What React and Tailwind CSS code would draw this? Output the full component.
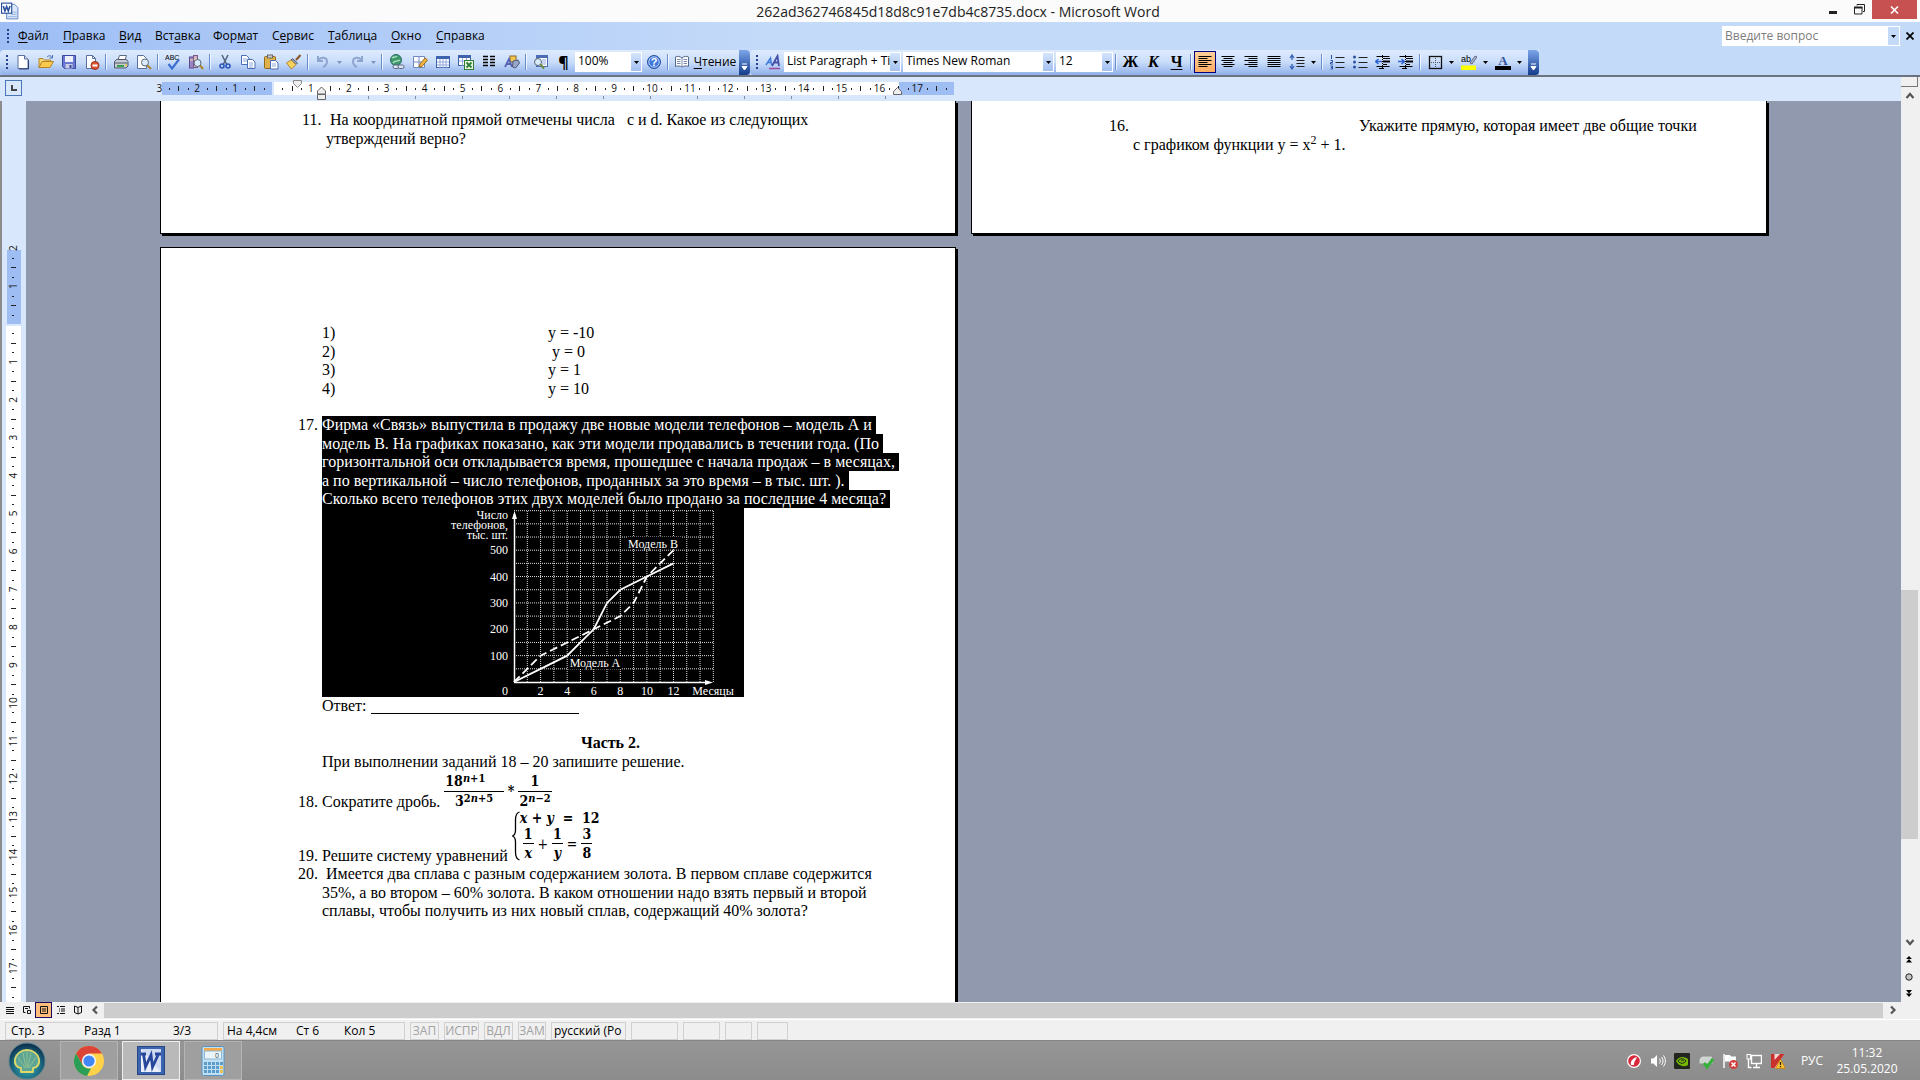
import React from 'react';

const CM = 37.9; // one centimetre on the rulers

/* ---------- small building blocks ---------- */

const Icon = ({ children, size = 16 }) => (
  <svg width={size} height={size} viewBox="0 0 16 16" fill="none" aria-hidden="true" className="shrink-0">
    {children}
  </svg>
);

const ToolButton = ({ label, children, active }) => (
  <button
    aria-label={label}
    className={
      active
        ? 'flex h-[22px] w-[22px] shrink-0 items-center justify-center border border-[#000080] bg-linear-to-b from-[#ffd09a] to-[#fdac62]'
        : 'flex h-[22px] w-[23px] shrink-0 items-center justify-center'
    }
  >
    {children}
  </button>
);

const Sep = () => (
  <div className="flex w-[6px] shrink-0 justify-center">
    <div className="h-4 w-px bg-[#6a8ccb]" />
    <div className="h-4 w-px bg-white/70" />
  </div>
);

const Caret = ({ color = '#000' }) => (
  <svg width="5" height="3" viewBox="0 0 5 3" aria-hidden="true">
    <path d="M0 0h5L2.5 3z" fill={color} />
  </svg>
);

const DropButton = ({ label, color }) => (
  <button aria-label={label} className="flex h-[22px] w-[11px] shrink-0 items-center justify-center">
    <Caret color={color} />
  </button>
);

const Grip = () => (
  <div className="flex w-[9px] shrink-0 flex-col items-center gap-[2px]">
    {[0, 1, 2, 3].map((i) => (
      <div key={i} className="h-[2px] w-[2px] bg-[#27418f]" />
    ))}
  </div>
);

const Combo = ({ label, value, width }) => (
  <div className={`relative h-5 shrink-0 bg-white ${width}`}>
    <select aria-label={label} className="block h-[18px] w-full appearance-none overflow-hidden bg-transparent pr-[10px] pl-[3px] text-xs leading-[18px] whitespace-nowrap outline-none">
      <option>{value}</option>
    </select>
    <div className="pointer-events-none absolute top-px right-px flex h-[18px] w-[10px] items-center justify-center bg-linear-to-b from-[#d4e4fb] to-[#a3c0f0]">
      <Caret />
    </div>
  </div>
);

const ToolbarEnd = () => (
  <button aria-label="Параметры панелей инструментов" className="flex h-[25px] w-[11px] shrink-0 items-end justify-center rounded-r-sm bg-linear-to-b from-[#7ea6ea] to-[#143c8c] pb-1">
    <svg width="7" height="8" viewBox="0 0 7 8" aria-hidden="true">
      <path d="M1 1h5M1 3.500h5L3.500 7z" stroke="#fff" fill="#fff" strokeWidth="1" />
    </svg>
  </button>
);

/* ---------- toolbar icons ---------- */

const pageShape = <path d="M3 1.500h6.500l3.500 3.500v9.500h-10z" fill="#fff" stroke="#5a6f9e" />;

const NewIcon = () => (
  <Icon>
    {pageShape}
    <path d="M9.500 1.500v3.500h3.500" fill="#cfdcf3" stroke="#5a6f9e" />
    <path d="M13.500 6v9H4" stroke="#2b3f70" />
  </Icon>
);

const OpenIcon = () => (
  <Icon>
    <path d="M1 13.500v-9h4l1.500 1.500h6v2" fill="#f7d774" stroke="#b0852a" />
    <path d="M1 13.500l3-6h11.500l-3.500 6z" fill="#fbc94c" stroke="#b0852a" />
    <path d="M9 3c2-2 4-1.500 5 .5M14.500 1v3h-3" stroke="#4a6db5" />
  </Icon>
);

const SaveIcon = () => (
  <Icon>
    <path d="M1.500 1.500h13v13h-11l-2-2z" fill="#6a77d0" stroke="#3b479c" />
    <rect x="4" y="2" width="8" height="6" fill="#eef1fb" />
    <rect x="4.500" y="10" width="7" height="4.500" fill="#c9cde8" />
    <rect x="8.500" y="11" width="2" height="3" fill="#3b479c" />
  </Icon>
);

const PermissionIcon = () => (
  <Icon>
    <path d="M2.500 1.500h6l3 3v10h-9z" fill="#fff" stroke="#5a6f9e" />
    <path d="M8.500 1.500v3h3" stroke="#5a6f9e" />
    <circle cx="11" cy="11.500" r="4" fill="#dd5533" stroke="#9c2d17" />
    <path d="M8.500 11.500h5" stroke="#fff" strokeWidth="2" />
  </Icon>
);

const PrintIcon = () => (
  <Icon>
    <path d="M5 6l1.500-4.500h7L12 6" fill="#fff" stroke="#5d6b80" />
    <path d="M1.500 7.500l2-2h10l1.500 2v4.500l-2 2h-11.500z" fill="#c6cbd3" stroke="#4e5a6c" />
    <path d="M2 9h12.500" stroke="#4e5a6c" />
    <path d="M4 12h7" stroke="#35a04a" strokeWidth="2" />
    <path d="M12 11h2" stroke="#f0c040" strokeWidth="1.500" />
  </Icon>
);

const PreviewIcon = () => (
  <Icon>
    <path d="M1.500 1.500h6l3 3v10h-9z" fill="#fff" stroke="#5a6f9e" />
    <circle cx="9" cy="8.500" r="3.500" fill="#d9ecfb" stroke="#5a6674" />
    <path d="M11.500 11.500l3.500 3.500" stroke="#b0852a" strokeWidth="2" />
  </Icon>
);

const SpellIcon = () => (
  <Icon>
    <text x="0" y="6" fontSize="7" fontFamily="Liberation Sans, sans-serif" fill="#000">ABC</text>
    <path d="M3.500 10l3.500 4.500L14 5.500" stroke="#3b6fd0" strokeWidth="2.200" />
  </Icon>
);

const ResearchIcon = () => (
  <Icon>
    <rect x="1.500" y="3" width="4" height="11" fill="#9d84c8" stroke="#5c4a8a" />
    <rect x="5.500" y="1.500" width="4" height="12" fill="#d3b2c8" stroke="#7a5a86" />
    <path d="M2 6h3M6 5h3" stroke="#f5e6a0" />
    <circle cx="9.500" cy="9" r="3.500" fill="#d9ecfb" stroke="#5a6674" />
    <path d="M12 11.500l3 3.500" stroke="#b0852a" strokeWidth="2" />
  </Icon>
);

const CutIcon = () => (
  <Icon>
    <path d="M5 1l4.500 9M11 1L6.500 10" stroke="#54657f" strokeWidth="1.600" />
    <circle cx="5" cy="12" r="2" stroke="#2a57b8" strokeWidth="1.600" />
    <circle cx="11" cy="12" r="2" stroke="#2a57b8" strokeWidth="1.600" />
  </Icon>
);

const CopyIcon = () => (
  <Icon>
    <path d="M1.500 1.500h5l2.500 2.500v6.500h-7.500z" fill="#fff" stroke="#4a6db5" />
    <path d="M3 5h4M3 7h4" stroke="#8fa9dc" />
    <path d="M7.500 5.500h5l2.500 2.500v6.500h-7.500z" fill="#fff" stroke="#4a6db5" />
    <path d="M9 9h4M9 11h4M9 13h4" stroke="#8fa9dc" />
  </Icon>
);

const PasteIcon = () => (
  <Icon>
    <rect x="1.500" y="2.500" width="11" height="12" rx="1" fill="#e0b04a" stroke="#8c6a1f" />
    <rect x="4.500" y="1" width="5" height="3" fill="#c9c9c9" stroke="#6a6a6a" />
    <path d="M7.500 6.500h5l2.500 2.500v6h-7.500z" fill="#fff" stroke="#4a6db5" />
    <path d="M9 10h4M9 12h4" stroke="#8fa9dc" />
  </Icon>
);

const BrushIcon = () => (
  <Icon>
    <path d="M10 6l4.500-5" stroke="#8c5a30" strokeWidth="2.200" />
    <path d="M6.500 4.500l5 4.500-1.500 1.500-5-4.500z" fill="#8d9bb4" stroke="#58657d" />
    <path d="M5 6l5 4.500-4.500 4.500-5-6z" fill="#f6d260" stroke="#b0852a" />
  </Icon>
);

const UndoIcon = ({ flip }) => (
  <Icon>
    <path
      d={flip ? 'M13 2v5H8M12.500 6.500C10 2.500 4 3 4 7.500c0 3 2 4.500 4 5.500' : 'M3 2v5h5M3.500 6.500C6 2.500 12 3 12 7.500c0 3-2 4.500-4 5.500'}
      stroke="#8ea5cf"
      strokeWidth="2"
    />
  </Icon>
);

const LinkIcon = () => (
  <Icon>
    <circle cx="7" cy="6" r="5.500" fill="#3f9a6a" stroke="#2e6b70" />
    <path d="M3 4c2-2 4 0 5-2M4 9c2-3 5-1 7-3" stroke="#a9dcc0" strokeWidth="1.500" />
    <rect x="4" y="11" width="6" height="3.500" rx="1.700" stroke="#58657d" fill="#dfe6f2" />
    <rect x="9" y="11" width="6" height="3.500" rx="1.700" stroke="#58657d" fill="#dfe6f2" />
  </Icon>
);

const TableDrawIcon = () => (
  <Icon>
    <path d="M1.500 2.500h11v11h-11zM1.500 8h11M7 2.500v11" fill="#fff" stroke="#7089bf" />
    <path d="M7 13l1-3 5-6 2.500 2-5.500 6.500z" fill="#f3b345" stroke="#9a6a20" />
  </Icon>
);

const TableIcon = () => (
  <Icon>
    <rect x="1.500" y="2.500" width="13" height="11" fill="#fff" stroke="#3f62ad" />
    <rect x="1" y="2" width="14" height="3" fill="#3f62ad" />
    <path d="M2 8h12M2 11h12M5 5v9M8 5v9M11 5v9" stroke="#8fa9dc" />
  </Icon>
);

const ExcelIcon = () => (
  <Icon>
    <rect x="0.500" y="1.500" width="12" height="10" fill="#fff" stroke="#3f62ad" />
    <rect x="0" y="1" width="13" height="3" fill="#3f62ad" />
    <path d="M1 7h12M4.500 4v8M8.500 4v8" stroke="#8fa9dc" />
    <rect x="6.500" y="6.500" width="9" height="9" fill="#e8f5e4" stroke="#2e7d32" />
    <path d="M8.500 8.500l5 5M13.500 8.500l-5 5" stroke="#2e7d32" strokeWidth="1.800" />
  </Icon>
);

const ColumnsIcon = () => (
  <Icon>
    <path d="M2 2.500h5M2 5.500h5M2 8.500h5M2 11.500h5M9 2.500h5M9 5.500h5M9 8.500h5M9 11.500h5" stroke="#000" strokeWidth="1.500" />
  </Icon>
);

const DrawingIcon = () => (
  <Icon>
    <rect x="6" y="2" width="6" height="6" fill="#f4c752" stroke="#8c6a1f" />
    <path d="M1 13L5 5l3 8M2.500 10h4.500" stroke="#5663b5" strokeWidth="1.800" />
    <path d="M9 7l5-1 1.500 3-4 5-3-1z" fill="#9aa7c8" stroke="#4b577a" />
  </Icon>
);

const DocMapIcon = () => (
  <Icon>
    <rect x="3.500" y="1.500" width="11" height="11" fill="#fff" stroke="#4a6db5" />
    <path d="M4 3h10" stroke="#4a6db5" strokeWidth="2" />
    <path d="M9 6h4M9 8h4M9 10h4" stroke="#8fa9dc" />
    <circle cx="5" cy="8" r="3.500" fill="#d9ecfb" stroke="#5a6674" />
    <path d="M7.500 10.500l3.500 4" stroke="#6c8a3a" strokeWidth="2" />
  </Icon>
);

const HelpIcon = () => (
  <Icon>
    <circle cx="8" cy="8" r="6.500" fill="#3d78dc" stroke="#2950a4" />
    <circle cx="8" cy="8" r="5.200" stroke="#dce8fb" strokeWidth="0.800" />
    <text x="8" y="12" textAnchor="middle" fontSize="11" fontWeight="700" fontFamily="Liberation Sans, sans-serif" fill="#fff">?</text>
  </Icon>
);

const BookIcon = () => (
  <Icon>
    <path d="M8 4C6 2 3 2 1.500 3v9.500c2-1 5-.5 6.500.500 1.500-1 4.500-1.500 6.500-.5V3C13 2 10 2 8 4z" fill="#fff" stroke="#56678c" />
    <path d="M8 4v9M3 5.500h3.500M3 7.500h3.500M3 9.500h3.500M9.500 5.500H13M9.500 7.500H13M9.500 9.500H13" stroke="#7d8cae" />
  </Icon>
);

const StylesIcon = () => (
  <Icon>
    <path d="M1 11L5.500 4l1 7M2.500 8.500h4" stroke="#3d78dc" strokeWidth="1.400" />
    <path d="M7 12l5.500-10 1.500 10M9 8.500h4.500" stroke="#4450a8" strokeWidth="1.800" />
    <path d="M4 14.500h11" stroke="#9c4aa0" strokeWidth="1.500" />
  </Icon>
);

const ALIGN = {
  left: 'M1.500 2.500h13M1.500 4.500h9M1.500 6.500h13M1.500 8.500h9M1.500 10.500h13M1.500 12.500h9',
  center: 'M1.500 2.500h13M3.500 4.500h9M1.500 6.500h13M3.500 8.500h9M1.500 10.500h13M3.500 12.500h9',
  right: 'M1.500 2.500h13M5.500 4.500h9M1.500 6.500h13M5.500 8.500h9M1.500 10.500h13M5.500 12.500h9',
  full: 'M1.500 2.500h13M1.500 4.500h13M1.500 6.500h13M1.500 8.500h13M1.500 10.500h13M1.500 12.500h13',
};

const AlignIcon = ({ kind }) => (
  <Icon>
    <path d={ALIGN[kind]} stroke="#000" />
  </Icon>
);

const SpacingIcon = () => (
  <Icon>
    <path d="M7.500 3.500h8M7.500 6.500h8M7.500 9.500h8M7.500 12.500h8" stroke="#222" />
    <path d="M3 1v5M1 4l2-3 2 3M3 10v5M1 12l2 3 2-3" stroke="#3a62b4" strokeWidth="1.300" />
  </Icon>
);

const NumberedIcon = () => (
  <Icon>
    <path d="M6.500 3.500h9M6.500 8.500h9M6.500 13.500h9" stroke="#222" />
    <path d="M2.500 1v4M1.500 6.500h2v2h-2v1.500h2.500M1.500 12h2v3h-2M2 13.500h1.500" stroke="#2c50a0" />
  </Icon>
);

const BulletsIcon = () => (
  <Icon>
    <path d="M6.500 3.500h9M6.500 8.500h9M6.500 13.500h9" stroke="#222" />
    <circle cx="2.500" cy="3" r="1.500" fill="#2c50a0" />
    <circle cx="2.500" cy="8" r="1.500" fill="#2c50a0" />
    <circle cx="2.500" cy="13" r="1.500" fill="#2c50a0" />
  </Icon>
);

const IndentIcon = ({ inward }) => (
  <Icon>
    <path d="M1.500 2.500h13M8 4.500h7M8 10.500h4M1.500 12.500h13M4 14.500h5" stroke="#000" />
    <path d="M8 7.500h7" stroke="#000" strokeWidth="2" />
    <path d={inward ? 'M0 7.500h6M3.500 5l3 2.500-3 2.500' : 'M7 7.500H1M3.500 5l-3 2.500 3 2.500'} stroke="#2c62d0" strokeWidth="1.500" />
    <path d="M7.500 1v14" stroke="#000" strokeDasharray="1 1" />
  </Icon>
);

const BordersIcon = () => (
  <Icon>
    <rect x="2.500" y="2.500" width="12" height="12" stroke="#111" strokeWidth="1.300" />
    <path d="M8.500 4v9M4 8.500h9" stroke="#555" strokeDasharray="1 1" />
  </Icon>
);

const HighlightIcon = () => (
  <Icon>
    <text x="0" y="8" fontSize="9" fontFamily="Liberation Sans, sans-serif" fill="#000">ab</text>
    <path d="M9 9l5-7 2 1-5 7z" fill="#aeb6c8" stroke="#4b577a" strokeWidth="0.800" />
    <rect x="0" y="11.500" width="15" height="4.500" fill="#ffff00" />
  </Icon>
);

const FontColorIcon = () => (
  <Icon>
    <text x="8" y="11" textAnchor="middle" fontSize="13" fontWeight="700" fontFamily="Liberation Serif, serif" fill="#33529c">A</text>
    <rect x="0" y="12" width="16" height="4" fill="#000" />
  </Icon>
);

/* ---------- window chrome ---------- */

const WordDocIcon = () => (
  <Icon size={18}>
    <path d="M5 2h7l3 3v10H5z" fill="#dce8fb" stroke="#5a7fc0" strokeWidth="0.800" />
    <path d="M9 9h5M9 11h5M6 13h8" stroke="#8fb0e0" strokeWidth="0.800" />
    <rect x="0.500" y="1" width="9" height="9" fill="#fff" stroke="#2a4f9c" />
    <path d="M2 3.500l1.500 4.500 1.500-4 1.500 4L8 3.500" stroke="#2a4f9c" strokeWidth="1.400" />
  </Icon>
);

const TitleBar = () => (
  <header className="flex h-[22px] items-start bg-[#fbfbfb]">
    <div className="flex w-24 items-center pt-[2px] pl-[1px]">
      <WordDocIcon />
    </div>
    <h1 className="flex-1 text-center text-sm leading-[23px] text-[#222]">
      262ad362746845d18d8c91e7db4c8735.docx - Microsoft Word
    </h1>
    <div className="flex pr-[3px]">
      <button aria-label="Свернуть" className="flex h-[19px] w-[26px] items-center justify-center">
        <svg width="10" height="10" viewBox="0 0 10 10"><path d="M1 7.500h8" stroke="#222" strokeWidth="3" /></svg>
      </button>
      <button aria-label="Свернуть в окно" className="flex h-[19px] w-[26px] items-center justify-center">
        <svg width="11" height="11" viewBox="0 0 11 11" fill="none">
          <path d="M3 1.500V.5h7.500v7h-1.500" stroke="#222" />
          <path d="M.5 3.500h7.500v6.500H.5z" stroke="#222" />
          <path d="M0 3.500h8.500" stroke="#222" strokeWidth="2" />
        </svg>
      </button>
      <button aria-label="Закрыть" className="flex h-[19px] w-[45px] items-center justify-center bg-[#c75050]">
        <svg width="9" height="8" viewBox="0 0 9 8"><path d="M1 .5l7 7M8 .5l-7 7" stroke="#fff" strokeWidth="1.600" /></svg>
      </button>
    </div>
  </header>
);

const MENU = [
  ['', 'Ф', 'айл', 'w-[45px]'],
  ['', 'П', 'равка', 'w-[56px]'],
  ['', 'В', 'ид', 'w-[36px]'],
  ['Вст', 'а', 'вка', 'w-[58px]'],
  ['Фор', 'м', 'ат', 'w-[59px]'],
  ['С', 'е', 'рвис', 'w-[56px]'],
  ['', 'Т', 'аблица', 'w-[63px]'],
  ['', 'О', 'кно', 'w-[45px]'],
  ['', 'С', 'правка', 'w-[62px]'],
];

const MenuBar = () => (
  <div className="flex h-7 items-center">
    <div className="w-[3px]" />
    <Grip />
    <nav className="flex flex-1 pl-[6px] text-xs text-black">
      {MENU.map(([before, key, after, width]) => (
        <button key={before + key + after} className={`${width} text-left whitespace-nowrap`}>
          {before}
          <span className="underline underline-offset-2">{key}</span>
          {after}
        </button>
      ))}
    </nav>
    <div className="flex h-5 w-[178px] bg-white">
      <input
        aria-label="Введите вопрос"
        placeholder="Введите вопрос"
        className="min-w-0 flex-1 pl-[3px] text-xs placeholder-[#7d7d7d] outline-none"
      />
      <button aria-label="Список вопросов" className="my-px mr-px flex w-[11px] items-center justify-center bg-[#c4daf9]">
        <Caret />
      </button>
    </div>
    <button aria-label="Закрыть документ" className="flex w-5 items-center justify-center">
      <svg width="8" height="8" viewBox="0 0 8 8"><path d="M.5.5l7 7M7.500.5l-7 7" stroke="#000" strokeWidth="1.700" /></svg>
    </button>
  </div>
);

const TOOLBAR_BG = 'flex h-[25px] items-start rounded-l-sm bg-linear-to-b from-[#deebfd] via-[#c8dcfa] to-[#8fb0ea]';

const TOOLS = 'flex h-6 items-center';

const Toolbars = () => (
  <div className="flex">
    <div className={TOOLBAR_BG}>
      <div className={TOOLS}>
        <div className="w-[2px]" />
        <Grip />
        <ToolButton label="Создать"><NewIcon /></ToolButton>
        <ToolButton label="Открыть"><OpenIcon /></ToolButton>
        <ToolButton label="Сохранить"><SaveIcon /></ToolButton>
        <ToolButton label="Разрешения"><PermissionIcon /></ToolButton>
        <Sep />
        <ToolButton label="Печать"><PrintIcon /></ToolButton>
        <ToolButton label="Предварительный просмотр"><PreviewIcon /></ToolButton>
        <Sep />
        <ToolButton label="Правописание"><SpellIcon /></ToolButton>
        <ToolButton label="Справочные материалы"><ResearchIcon /></ToolButton>
        <Sep />
        <ToolButton label="Вырезать"><CutIcon /></ToolButton>
        <ToolButton label="Копировать"><CopyIcon /></ToolButton>
        <ToolButton label="Вставить"><PasteIcon /></ToolButton>
        <ToolButton label="Формат по образцу"><BrushIcon /></ToolButton>
        <Sep />
        <ToolButton label="Отменить"><UndoIcon /></ToolButton>
        <DropButton label="Список отмены" color="#7d93bd" />
        <ToolButton label="Вернуть"><UndoIcon flip /></ToolButton>
        <DropButton label="Список возврата" color="#7d93bd" />
        <Sep />
        <ToolButton label="Гиперссылка"><LinkIcon /></ToolButton>
        <ToolButton label="Таблицы и границы"><TableDrawIcon /></ToolButton>
        <ToolButton label="Добавить таблицу"><TableIcon /></ToolButton>
        <ToolButton label="Лист Excel"><ExcelIcon /></ToolButton>
        <ToolButton label="Колонки"><ColumnsIcon /></ToolButton>
        <ToolButton label="Рисование"><DrawingIcon /></ToolButton>
        <Sep />
        <ToolButton label="Схема документа"><DocMapIcon /></ToolButton>
        <ToolButton label="Непечатаемые знаки"><span className="text-base leading-5 font-bold">¶</span></ToolButton>
        <Combo label="Масштаб" value="100%" width="w-[67px]" />
        <ToolButton label="Справка"><HelpIcon /></ToolButton>
        <Sep />
        <button className="flex w-[68px] items-center justify-center gap-1 text-xs">
          <BookIcon />
          <span><span className="underline underline-offset-2">Ч</span>тение</span>
        </button>
      </div>
      <ToolbarEnd />
    </div>
    <div className={TOOLBAR_BG}>
      <div className={TOOLS}>
        <div className="w-[2px]" />
        <Grip />
        <ToolButton label="Стили и форматирование"><StylesIcon /></ToolButton>
        <div className="flex gap-[2px]">
          <Combo label="Стиль" value="List Paragraph + Ti" width="w-[117px]" />
          <Combo label="Шрифт" value="Times New Roman" width="w-[151px]" />
          <Combo label="Размер шрифта" value="12" width="w-[57px]" />
        </div>
        <Sep />
        <div className="flex font-['Liberation_Serif',serif] text-base leading-5 font-bold">
          <ToolButton label="Полужирный">Ж</ToolButton>
          <ToolButton label="Курсив"><span className="italic">К</span></ToolButton>
          <ToolButton label="Подчеркнутый"><span className="underline underline-offset-2">Ч</span></ToolButton>
        </div>
        <Sep />
        <ToolButton label="По левому краю" active><AlignIcon kind="left" /></ToolButton>
        <ToolButton label="По центру"><AlignIcon kind="center" /></ToolButton>
        <ToolButton label="По правому краю"><AlignIcon kind="right" /></ToolButton>
        <ToolButton label="По ширине"><AlignIcon kind="full" /></ToolButton>
        <ToolButton label="Междустрочный интервал"><SpacingIcon /></ToolButton>
        <DropButton label="Выбор интервала" />
        <Sep />
        <ToolButton label="Нумерация"><NumberedIcon /></ToolButton>
        <ToolButton label="Маркеры"><BulletsIcon /></ToolButton>
        <ToolButton label="Уменьшить отступ"><IndentIcon /></ToolButton>
        <ToolButton label="Увеличить отступ"><IndentIcon inward /></ToolButton>
        <Sep />
        <ToolButton label="Внешние границы"><BordersIcon /></ToolButton>
        <DropButton label="Выбор границ" />
        <ToolButton label="Выделение цветом"><HighlightIcon /></ToolButton>
        <DropButton label="Выбор выделения" />
        <ToolButton label="Цвет шрифта"><FontColorIcon /></ToolButton>
        <DropButton label="Выбор цвета" />
        <div className="w-[3px]" />
      </div>
      <ToolbarEnd />
    </div>
  </div>
);

/* ---------- rulers ---------- */

const range = (from, to) => Array.from({ length: to - from + 1 }, (_, i) => from + i);

const HorizontalRuler = () => {
  const zero = 274;
  const quarters = range(-11, 71).filter((q) => q % 4 !== 0);
  return (
    <svg width="1000" height="24" fill="none" aria-hidden="true" className="shrink-0">
      <rect x="162" y="5" width="110" height="13" fill="#9ebdf2" />
      <rect x="274" y="5" width="625" height="13" fill="#fff" />
      <rect x="899" y="5" width="55" height="13" fill="#9ebdf2" />
      {quarters.map((q) => {
        const x = Math.round(zero + (q * CM) / 4) - 1;
        return q % 2 === 0 ? (
          <rect key={q} x={x} y="9" width="1" height="5" fill="#222" />
        ) : (
          <rect key={q} x={x} y="11" width="1" height="2" fill="#222" />
        );
      })}
      {range(-3, 17).filter((n) => n !== 0).map((n) => (
        <text key={n} x={zero - 1 + n * CM} y="15" textAnchor="middle" fontSize="10" fill="#111">
          {Math.abs(n)}
        </text>
      ))}
      {range(1, 12).map((n) => (
        <rect key={n} x={321 + n * 47} y="19" width="1" height="3" fill="#7f8ba3" />
      ))}
      <path d="M293.500 3.500h8v3l-4 4-4-4z" fill="#eee" stroke="#8a8a8a" />
      <path d="M317.500 17v-3l4-4 4 4v3zM317.500 17.500h8v5h-8z" fill="#eee" stroke="#666" />
      <path d="M893.500 17.500v-3l4-4 4 4v3z" fill="#eee" stroke="#666" />
    </svg>
  );
};

const VerticalRuler = () => {
  const zero = 223;
  const quarters = range(-7, 71).filter((q) => q % 4 !== 0);
  return (
    <svg width="24" height="901" fill="none" aria-hidden="true">
      <rect x="5" y="149" width="14" height="74" fill="#9ebdf2" />
      <rect x="4" y="225" width="15" height="676" fill="#fff" />
      {quarters.map((q) => {
        const y = Math.round(zero + (q * CM) / 4);
        return q % 2 === 0 ? (
          <rect key={q} x="9" y={y} width="5" height="1" fill="#222" />
        ) : (
          <rect key={q} x="10" y={y} width="2" height="1" fill="#222" />
        );
      })}
      {range(-2, 17).filter((n) => n !== 0).map((n) => {
        const y = zero + n * CM;
        return (
          <text key={n} x="15" y={y} transform={`rotate(-90 15 ${y})`} textAnchor="middle" fontSize="10" fill="#111">
            {Math.abs(n)}
          </text>
        );
      })}
    </svg>
  );
};

/* ---------- document ---------- */

const LINES = '*:leading-[18px] *:even:leading-[19px]';

const Numbered = ({ n, inline, children }) => (
  <div className={inline ? 'flex items-end' : 'flex items-start'}>
    <span className="w-6 shrink-0 whitespace-nowrap">{n}.</span>
    <div className={inline ? '' : LINES}>{children}</div>
  </div>
);

const GRID_X = 13.29;
const GRID_Y = 13.18;
const px = (month) => 192 + month * GRID_X;
const py = (thousand) => 174 - (thousand / 50) * GRID_Y;
const points = (data) => data.map(([m, t]) => `${px(m)},${py(t)}`).join(' ');

const MODEL_A = [[0, 0], [2, 50], [4, 100], [5, 150], [6, 200], [7, 300], [8, 350], [10, 400], [12, 450]];
const MODEL_B = [[0, 0], [2, 100], [4, 150], [6, 200], [8, 250], [9, 300], [10, 400], [12, 500]];

const SalesChart = () => (
  <svg width="422" height="189" className="block bg-black" fontSize="12" fill="#fff" aria-label="График продаж">
    {range(1, 15).map((i) => (
      <line key={i} x1={px(i)} x2={px(i)} y1="3" y2="174" stroke="#dcdcdc" strokeDasharray="1 1" />
    ))}
    {range(1, 13).map((i) => (
      <line key={i} x1="192" x2={px(15)} y1={py(i * 50)} y2={py(i * 50)} stroke="#dcdcdc" strokeDasharray="1 1" />
    ))}
    <rect x="305" y="29" width="54" height="12" fill="#000" />
    <rect x="246" y="149" width="54" height="12" fill="#000" />
    <path d="M192.500 174V6M192 174.500h194" stroke="#fff" strokeWidth="1.500" />
    <path d="M192.500 3l2.500 8h-5zM391 174.500l-8 2.500v-5z" />
    <polyline points={points(MODEL_A)} fill="none" stroke="#fff" strokeWidth="1.800" />
    <polyline points={points(MODEL_B)} fill="none" stroke="#fff" strokeWidth="1.800" strokeDasharray="8 4" />
    <g textAnchor="end">
      <text x="186" y="11">Число</text>
      <text x="186" y="21">телефонов,</text>
      <text x="186" y="31">тыс. шт.</text>
      {[100, 200, 300, 400, 500].map((v) => (
        <text key={v} x="186" y={py(v) + 4}>{v}</text>
      ))}
      <text x="186" y="187">0</text>
    </g>
    <g textAnchor="middle">
      {[2, 4, 6, 8, 10, 12].map((v) => (
        <text key={v} x={px(v)} y="187">{v}</text>
      ))}
      <text x="331" y="40">Модель B</text>
      <text x="273" y="159">Модель A</text>
      <text x="391" y="187">Месяцы</text>
    </g>
  </svg>
);

const Frac = ({ top, bottom }) => (
  <span className="inline-flex flex-col items-center">
    <span className="px-px">{top}</span>
    <span className="h-px w-full bg-black" />
    <span className="px-px">{bottom}</span>
  </span>
);

const Sup = ({ children }) => <sup className="text-xs leading-none">{children}</sup>;

const Power = ({ children }) => <sup className="-top-1 text-[11px] leading-none">{children}</sup>;

const MATH = "font-['DejaVu_Serif_Condensed','DejaVu_Serif',serif] font-bold text-[14px]";

const PAGE = 'w-[796px] shrink-0 border border-black bg-white shadow-[2px_2px_0_#000]';

const SELECTED = [
  'Фирма «Связь» выпустила в продажу две новые модели телефонов – модель А и\u00a0',
  'модель В. На графиках показано, как эти модели продавались в течении года. (По\u00a0',
  'горизонтальной оси откладывается время, прошедшее с начала продаж – в месяцах,\u00a0',
  'а по вертикальной – число телефонов, проданных за это время – в тыс. шт. ).\u00a0',
  'Сколько всего телефонов этих двух моделей было продано за последние 4 месяца?\u00a0',
];

const ANSWERS = ['у = -10', '\u00a0у = 0', 'у = 1', 'у = 10'];

const DocumentArea = () => (
  <main className="flex-1 overflow-hidden bg-[#9099ae] pl-[134px] font-['Liberation_Serif',serif] text-base leading-[18px] text-black">
    <div className="flex gap-[15px]">
      <section className={`${PAGE} h-[133px] border-t-0 pt-[10px] pl-[141px]`}>
        <Numbered n="11">
          <div className="whitespace-pre">{'\u00a0На координатной прямой отмечены числа   с и d. Какое из следующих'}</div>
          <div>утверждений верно?</div>
        </Numbered>
      </section>
      <section className={`${PAGE} h-[133px] border-t-0 pt-4 pl-[137px]`}>
        <Numbered n="16">
          <div className="pl-[226px]">Укажите прямую, которая имеет две общие точки</div>
          <div>с графиком функции у = х<Sup>2</Sup> + 1.</div>
        </Numbered>
      </section>
    </div>

    <section className={`${PAGE} mt-[13px] min-h-[900px] pt-[76px] pr-14 pl-[137px] whitespace-nowrap`}>
      <ol className={`pl-6 ${LINES}`}>
        {ANSWERS.map((a, i) => (
          <li key={a} className="flex">
            <span className="w-[226px]">{i + 1})</span>
            <span>{a}</span>
          </li>
        ))}
      </ol>

      <div className="mt-[18px]">
        <Numbered n="17">
          {SELECTED.map((line) => (
            <div key={line} className="w-fit bg-black text-white">{line}</div>
          ))}
        </Numbered>
      </div>
      <div className="pl-6">
        <SalesChart />
        <div className="flex items-end">
          Ответ:&nbsp;
          <span className="mb-px h-px w-52 bg-black" />
        </div>
        <h2 className="mt-[18px] text-center leading-[19px] font-bold">Часть 2.</h2>
        <p className="leading-[19px]">При выполнении заданий 18 – 20 запишите решение.</p>
      </div>

      <Numbered n="18" inline>
        <div className="flex h-10 items-end">
          Сократите дробь.
          <span className={`ml-1 flex items-center gap-1 leading-[19px] ${MATH}`}>
            <Frac top={<>18<Power><i>n</i>+1</Power>&nbsp;&nbsp;&nbsp;&nbsp;</>} bottom={<>3<Power>2<i>n</i>+5</Power></>} />
            <span>*</span>
            <Frac top="1" bottom={<>2<Power><i>n</i>−2</Power></>} />
          </span>
        </div>
      </Numbered>
      <Numbered n="19" inline>
        <div className="flex items-end">
          Решите систему уравнений
          <span className={`ml-1 flex h-[54px] items-start ${MATH}`}>
            <svg width="8" height="50" viewBox="0 0 8 50" fill="none" aria-hidden="true">
              <path d="M7.500 1C4 2 3.500 5 3.500 9v10c0 3-.5 5-3 6 2.500 1 3 3 3 6v10c0 4 .5 7 4 8" stroke="#000" strokeWidth="1.300" />
            </svg>
            <span className="flex flex-col">
              <span className="leading-[14px]"><i>x</i> + <i>y</i>&nbsp; =&nbsp; 12</span>
              <span className="flex items-center gap-1 pl-[3px] leading-[18px]">
                <Frac top="1" bottom={<i>x</i>} />
                <span className="font-normal">+</span>
                <Frac top="1" bottom={<i>y</i>} />
                <span className="font-normal">=</span>
                <Frac top="3" bottom="8" />
              </span>
            </span>
          </span>
        </div>
      </Numbered>
      <Numbered n="20">
        <div>&nbsp;Имеется два сплава с разным содержанием золота. В первом сплаве содержится</div>
        <div>35%, а во втором – 60% золота. В каком отношении надо взять первый и второй</div>
        <div>сплавы, чтобы получить из них новый сплав, содержащий 40% золота?</div>
      </Numbered>
    </section>
  </main>
);

/* ---------- scroll bars ---------- */

const Chevron = ({ d }) => (
  <svg width="10" height="10" viewBox="0 0 10 10" fill="none"><path d={d} stroke="#555" strokeWidth="2.200" /></svg>
);

const VerticalScroll = () => (
  <aside className="flex w-[19px] shrink-0 flex-col items-center bg-[#f0f0f0]">
    <div className="h-[10px] w-[17px] self-start border-r border-b border-[#777] bg-[#f0f0f0]" />
    <button aria-label="Вверх" className="flex h-[18px] w-full items-center justify-center pr-[2px]"><Chevron d="M1.500 7l3.500-4 3.500 4" /></button>
    <div className="flex w-full flex-1 flex-col pr-[2px]">
      <div className="flex-[485]" />
      <div className="flex-[249] bg-[#cdcdcd]" />
      <div className="flex-[94]" />
    </div>
    <button aria-label="Вниз" className="flex h-[18px] w-full items-center justify-center pr-[2px]"><Chevron d="M1.500 3l3.500 4 3.500-4" /></button>
    <button aria-label="Предыдущая страница" className="flex h-[17px] items-center pr-[3px]">
      <svg width="6" height="7" viewBox="0 0 6 7"><path d="M3 0l3 3H0zM3 3l3 3.500H0z" fill="#000" /></svg>
    </button>
    <button aria-label="Выбор объекта перехода" className="flex h-[17px] items-center pr-[3px]">
      <svg width="8" height="8" viewBox="0 0 8 8"><circle cx="4" cy="4" r="3.200" fill="#c4c4c4" stroke="#222" /></svg>
    </button>
    <button aria-label="Следующая страница" className="flex h-[17px] items-center pr-[3px]">
      <svg width="6" height="7" viewBox="0 0 6 7"><path d="M0 0h6L3 3.500zM0 3.500h6l-3 3.500z" fill="#000" /></svg>
    </button>
  </aside>
);

const VIEWS = [
  ['Обычный режим', 'M1 2.500h8M1 4.500h8M1 6.500h8M1 8.500h8'],
  ['Веб-документ', 'M1.500 1.500h6v2M1.500 1.500v6h2M5.500 5.500h3v3h-3zM3 3.500h3'],
  ['Разметка страницы', 'M1.500 1.500h7v7h-7zM3 4h4M3 6h4'],
  ['Структура', 'M1 1.500h2M4 1.500h5M3 4h1M5 4h4M3 6h1M5 6h4M1 8.500h2M4 8.500h5'],
  ['Режим чтения', 'M5 2.500L1.500 1v6.500L5 9l3.500-1.500V1zM5 2.500V9'],
];

const HorizontalScroll = () => (
  <div className="flex h-[18px] shrink-0 items-start border-b border-white bg-[#f0f0f0]">
    {VIEWS.map(([label, d], i) => (
      <button
        key={label}
        aria-label={label}
        className={
          i === 2
            ? 'flex h-4 w-[17px] items-center justify-center border border-[#1a0a60] bg-[#fcbc7c]'
            : 'flex h-4 w-[17px] items-center justify-center first:ml-px'
        }
      >
        <svg width="10" height="10" viewBox="0 0 10 10" fill="none"><path d={d} stroke="#111" /></svg>
      </button>
    ))}
    <button aria-label="Влево" className="flex h-4 w-[18px] items-center justify-center"><Chevron d="M7 1.500L3.500 5 7 8.500" /></button>
    <div className="mt-px h-[15px] flex-1 bg-[#cdcdcd]" />
    <button aria-label="Вправо" className="mr-[17px] flex h-4 w-5 items-center justify-center"><Chevron d="M3 1.500L6.500 5 3 8.500" /></button>
  </div>
);

/* ---------- status bar and task bar ---------- */

const Cell = ({ width, muted, children }) => (
  <div className={`flex h-[18px] items-center overflow-hidden border border-[#d0d0d0] whitespace-nowrap ${width} ${muted ? 'justify-center text-[#a3a3a3]' : ''}`}>
    {children}
  </div>
);

const StatusBar = () => (
  <footer className="flex h-5 shrink-0 items-end gap-[5px] bg-[#f0f0f0] pl-[5px] text-xs text-black">
    <Cell width="w-[213px] pl-[5px]">
      <span className="w-[73px]">Стр. 3</span>
      <span className="w-[89px]">Разд 1</span>
      <span>3/3</span>
    </Cell>
    <Cell width="w-[182px] pl-[3px]">
      <span className="w-[69px]">На 4,4см</span>
      <span className="w-12">Ст 6</span>
      <span>Кол 5</span>
    </Cell>
    <Cell width="w-[29px]" muted>ЗАП</Cell>
    <Cell width="w-[35px]" muted>ИСПР</Cell>
    <Cell width="w-[29px]" muted>ВДЛ</Cell>
    <Cell width="w-[28px]" muted>ЗАМ</Cell>
    <Cell width="w-[75px] pl-[2px]">русский (Ро</Cell>
    <Cell width="w-[47px]" />
    <Cell width="w-[37px]" />
    <Cell width="w-[27px]" />
    <Cell width="w-[31px]" />
  </footer>
);

const ShellOrb = () => (
  <svg width="38" height="38" viewBox="0 0 38 38" fill="none" aria-hidden="true">
    <defs>
      <radialGradient id="orb" cx="0.5" cy="0.65" r="0.6">
        <stop offset="0" stopColor="#3fb4b4" />
        <stop offset="0.6" stopColor="#1d6f86" />
        <stop offset="1" stopColor="#0d3350" />
      </radialGradient>
    </defs>
    <circle cx="19" cy="19" r="18" fill="url(#orb)" stroke="#5b8490" />
    <path d="M13 30v-4c-4 0-7-4-6-9 1-5 6-9 12-9s11 4 12 9c1 5-2 9-6 9v4z" fill="#5da596" stroke="#e0d868" strokeWidth="1.800" strokeLinejoin="round" />
    <path d="M17 26l-7-11M18 26l-3-15M19 26V10M20 26l3-15M21 26l7-11" stroke="#93bf8c" />
  </svg>
);

const ChromeIcon = () => (
  <svg width="30" height="30" viewBox="0 0 30 30" aria-hidden="true">
    <circle cx="15" cy="15" r="15" fill="#ffd24a" />
    <path d="M2 7.500A15 15 0 0 1 28 7.500H15L8.500 18.800z" fill="#dc4437" />
    <path d="M2 7.500l6.500 11.300A7.500 7.500 0 0 0 17 22.200L13 30A15 15 0 0 1 2 7.500z" fill="#2a9e57" />
    <circle cx="15" cy="15" r="7.200" fill="#f4f4f4" />
    <circle cx="15" cy="15" r="5.600" fill="#4285f4" />
  </svg>
);

const WordAppIcon = () => (
  <svg width="28" height="29" viewBox="0 0 28 29" fill="none" aria-hidden="true">
    <rect x="0.500" y="0.500" width="27" height="28" fill="#3c64ae" stroke="#234684" />
    <path d="M4 3h20v23H4z" fill="#e8eefa" />
    <path d="M4 3h20v23z" fill="#cddaf2" />
    <path d="M4 8h5M6.500 8l2 13 5.500-12 1.500 12 6-13M18 8h6" stroke="#27489a" strokeWidth="2.800" />
  </svg>
);

const CalcIcon = () => (
  <svg width="24" height="30" viewBox="0 0 24 30" fill="none" aria-hidden="true">
    <rect x="1" y="0.500" width="22" height="29" rx="1.500" fill="#bfe0f4" stroke="#5c93bc" />
    <rect x="3" y="2" width="18" height="3" fill="#f5a94a" />
    <rect x="3.500" y="5" width="17" height="8" fill="#e9f5fb" stroke="#8fb6cf" />
    <text x="18" y="12" textAnchor="end" fontSize="7" fill="#444">0</text>
    {[16, 20, 24].map((y) =>
      [3, 7, 11, 15, 19].map((x) => (
        <rect key={`${x}-${y}`} x={x} y={y} width="3" height="3" fill={x === 19 && y > 16 ? '#f0c050' : '#5d9cc9'} />
      ))
    )}
  </svg>
);

const TRAY = [
  ['Антивирус', (
    <>
      <circle cx="8" cy="8" r="7" fill="#fff" />
      <circle cx="8" cy="8" r="5.800" fill="#d8283c" />
      <path d="M5 12c-1-4 2-7 6-8-1 3-3 4-3 8" fill="#fff" />
    </>
  )],
  ['Громкость', (
    <>
      <path d="M1 5.500h2.500L7 2v12l-3.500-3.500H1z" fill="#fff" />
      <path d="M9.500 5.500c1 1.500 1 3.500 0 5M11.500 4c2 2.500 2 5.500 0 8M13.500 2.500c2.500 3.500 2.500 7.500 0 11" stroke="#fff" />
    </>
  )],
  ['NVIDIA', (
    <>
      <rect width="16" height="16" rx="1" fill="#22261c" />
      <path d="M2 8c3-5 8-5 12-2v6C9 15 4 12 2 8z" fill="#76b900" />
      <path d="M4 8c2-3 6-3 8 0-2 3-6 3-8 0zM7 8c1-1 2-1 3 0" stroke="#22261c" />
    </>
  )],
  ['Устройства', (
    <>
      <path d="M1 6l3-3h10l1 3v5H1z" fill="#cfd4d0" stroke="#8b908c" />
      <path d="M6 10l3 4 6-8" stroke="#35b23a" strokeWidth="3" />
    </>
  )],
  ['Центр поддержки', (
    <>
      <path d="M2 1v14" stroke="#fff" strokeWidth="1.500" />
      <path d="M3 2h5l1 1.500h5V10H8L7 8.500H3z" fill="#fff" />
      <circle cx="11.500" cy="11.500" r="4.500" fill="#d33c3c" />
      <path d="M9.500 9.500l4 4M13.500 9.500l-4 4" stroke="#fff" strokeWidth="1.500" />
    </>
  )],
  ['Сеть', (
    <>
      <rect x="5.500" y="2.500" width="10" height="8" stroke="#fff" strokeWidth="1.400" />
      <path d="M10.500 11v3M7 14.500h7M2.500 6v8.500h3" stroke="#fff" strokeWidth="1.400" />
      <rect x="1" y="1.500" width="3.500" height="4.500" fill="#999" stroke="#fff" />
    </>
  )],
  ['Касперский', (
    <>
      <path d="M1 1h13.500L10 7l4 8H1z" fill="#f0d8d6" />
      <path d="M1 1h3.500v6L10 1h4.500L4.500 15H1z" fill="#c9312c" />
      <path d="M10.500 6l5 9.500h-10z" fill="#fbc02d" stroke="#b87a10" strokeWidth="0.700" />
      <path d="M10.500 9v3M10.500 13v1.300" stroke="#222" strokeWidth="1.300" />
    </>
  )],
];

const TaskButton = ({ label, active, children }) => (
  <button
    aria-label={label}
    className={
      active
        ? 'flex h-full w-[58px] items-center justify-center border border-[#eee] bg-[#b9b9b9]'
        : 'flex h-full w-[58px] items-center justify-center border border-[#b4b4b4] bg-[#9f9f9f]'
    }
  >
    {children}
  </button>
);

const TaskBar = () => (
  <footer className="flex h-10 shrink-0 items-center border-t border-[#858585] bg-linear-to-b from-[#969696] to-[#8c8c8c] text-xs text-white">
    <button aria-label="Пуск" className="flex w-[60px] pl-2"><ShellOrb /></button>
    <div className="flex h-full flex-1 gap-1">
      <TaskButton label="Google Chrome"><ChromeIcon /></TaskButton>
      <TaskButton label="Microsoft Word" active><WordAppIcon /></TaskButton>
      <TaskButton label="Калькулятор"><CalcIcon /></TaskButton>
    </div>
    <div className="mr-1 flex gap-2">
      {TRAY.map(([label, art]) => (
        <button key={label} aria-label={label}><Icon>{art}</Icon></button>
      ))}
    </div>
    <button className="w-11 text-center">РУС</button>
    <div className="w-[66px] text-center leading-4">
      <div>11:32</div>
      <div>25.05.2020</div>
    </div>
    <div className="w-5" />
  </footer>
);

export default function App() {
  return (
    <div className="flex h-screen flex-col overflow-hidden bg-[#f0f0f0] font-['Open_Sans','Noto_Sans',sans-serif]">
      <TitleBar />
      <div className="bg-linear-to-r from-[#9ebef5] to-[#c4daf9] to-40%">
        <MenuBar />
        <Toolbars />
      </div>
      <div className="flex min-h-0 flex-1 border-t-2 border-[#6b7280]">
        <div className="flex min-w-0 flex-1 flex-col bg-[#d8e7fc]">
          <div className="flex h-6 shrink-0 overflow-hidden">
            <div className="w-0">
              <button aria-label="Тип табуляции" className="mt-[3px] ml-[5px] flex h-4 w-[17px] items-center justify-center border border-[#4a76b8]">
                <svg width="6" height="6" viewBox="0 0 6 6"><path d="M1 0v5h5" stroke="#444" strokeWidth="2" fill="none" /></svg>
              </button>
            </div>
            <HorizontalRuler />
          </div>
          <div className="flex min-h-0 flex-1">
            <div className="w-[26px] shrink-0 overflow-hidden border-l-2 border-[#8c8c8c]">
              <VerticalRuler />
            </div>
            <DocumentArea />
          </div>
        </div>
        <VerticalScroll />
      </div>
      <HorizontalScroll />
      <StatusBar />
      <TaskBar />
    </div>
  );
}
